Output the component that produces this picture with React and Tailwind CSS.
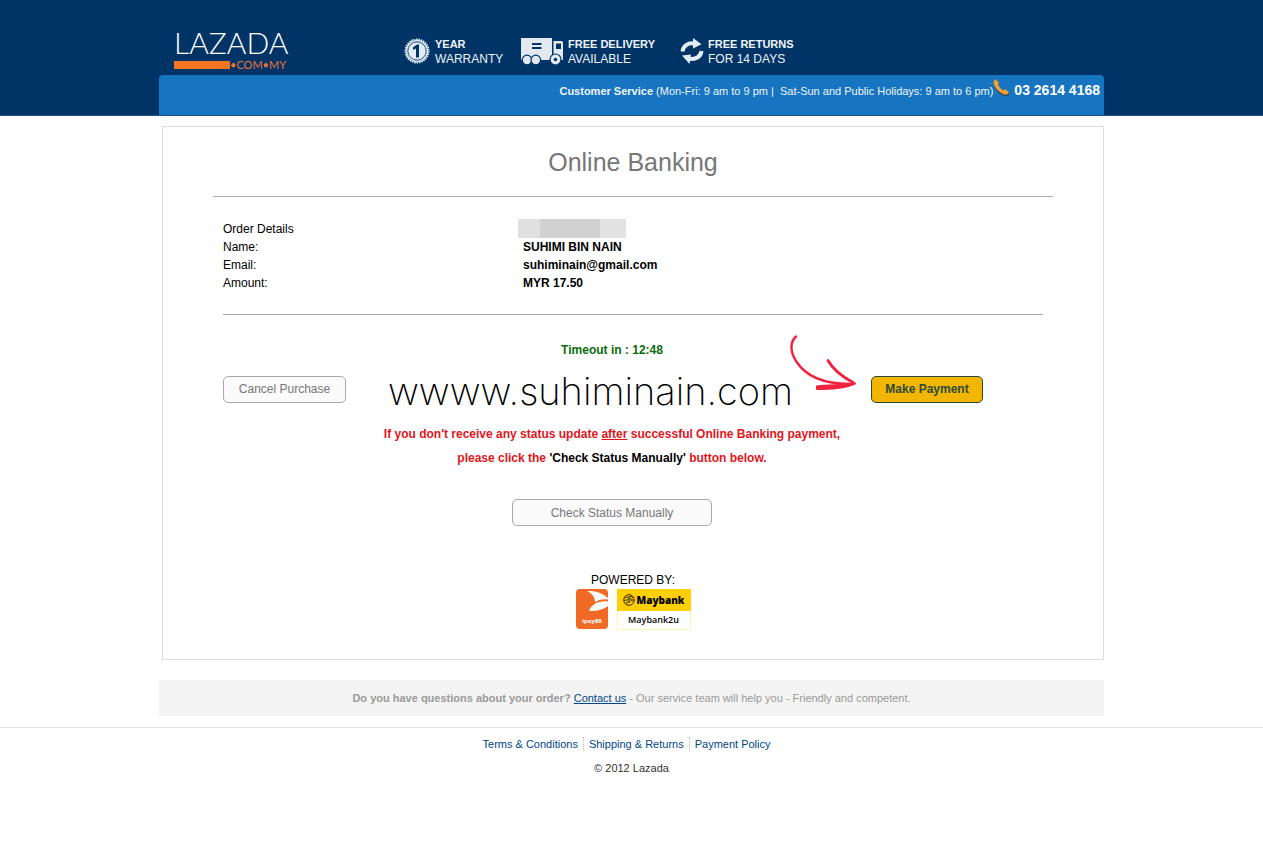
const features = [
  { icon: WarrantyIcon, title: "YEAR", text: "WARRANTY", className: "w-[117px] gap-[5px]" },
  { icon: TruckIcon, title: "FREE DELIVERY", text: "AVAILABLE", className: "w-[159px] gap-1" },
  { icon: ReturnsIcon, title: "FREE RETURNS", text: "FOR 14 DAYS", className: "gap-1" },
];

const orderDetails = [
  { label: "Name:", value: "SUHIMI BIN NAIN" },
  { label: "Email:", value: "suhiminain@gmail.com" },
  { label: "Amount:", value: "MYR 17.50" },
];

const footerLinks = ["Terms & Conditions", "Shipping & Returns", "Payment Policy"];

function WarrantyIcon() {
  return (
    <svg className="mt-px" width="26" height="26" viewBox="0 0 26 26" aria-hidden="true">
      <circle cx="13" cy="13" r="11" fill="none" stroke="#e3ebf5" strokeWidth="3" strokeDasharray="1.5 0.8" />
      <circle cx="13" cy="13" r="11" fill="#e3ebf5" />
      <circle cx="13" cy="13" r="9.2" fill="none" stroke="#003366" strokeWidth="0.9" />
      <path d="M9 9.300 13.200 6.500h1.800v13h-3V10.600l-3 1.500z" fill="#003366" />
    </svg>
  );
}

function TruckIcon() {
  return (
    <svg className="mt-px" width="43" height="27" viewBox="0 0 43 27" aria-hidden="true">
      <path d="M0 0h31v22H0z" fill="#e3e9f0" />
      <path d="M32.500 3h8q1.500 0 1.500 1.500V22H30V20.500h2.500z" fill="#e3e9f0" />
      <path d="M35 5.500h5v5.500h-5z" fill="#003366" />
      <path d="M11 6h9.500M11 10h9.500" stroke="#003366" strokeWidth="2" />
      <g fill="#e3e9f0" stroke="#003366" strokeWidth="1.200">
        <circle cx="6" cy="22" r="4.800" />
        <circle cx="14.800" cy="22" r="4.800" />
        <circle cx="34.500" cy="21.500" r="5.500" />
      </g>
      <circle cx="34.500" cy="21.500" r="1.700" fill="#003366" />
    </svg>
  );
}

function ReturnsIcon() {
  return (
    <svg className="mt-px" width="24" height="26" viewBox="0 0 24 26" aria-hidden="true">
      <g fill="none" stroke="#e3ebf5" strokeWidth="4">
        <path d="M2.500 13.500C3 8 8 4.500 14 5.500" />
        <path d="M21.500 13C21 18.500 16 21.500 10 20.800" />
      </g>
      <path d="M13 0l8.500 6.200L13 10.500z" fill="#e3ebf5" />
      <path d="M2 17.500l9-1-1.500 9.500z" fill="#e3ebf5" />
    </svg>
  );
}

function PhoneIcon() {
  return (
    <svg width="17" height="18" viewBox="0 0 17 18" aria-hidden="true">
      <path
        d="M2.800 1.200C.5 2.200.3 4 1.200 6.500c1.500 4.300 5 8.300 9.500 10 2.200.8 4 .5 5.600-1.700l-3.600-3.500-2.500 1C7.800 10.800 6.300 8.900 5.600 6.800L6 4.500z"
        fill="#2d3d4f"
      />
      <path
        d="M2.500.3C.5 1.300.2 3.200 1 5.500c1.500 4.300 5 8 9.500 9.800 2.200.8 4.200.3 5.500-1.700l-3.300-3.300-2.700 1C7.600 9.800 6 8 5.300 5.800L5.800 3.500z"
        fill="#f0a030"
      />
    </svg>
  );
}

function Logo() {
  return (
    <a href="#" className="block w-[115px] font-['Lato']">
      <span className="block h-[29px] text-[30px] leading-5 font-light text-white">LAZADA</span>
      <span className="flex h-2 items-center text-[11px] leading-2 text-[#e8743b]">
        <span className="h-2 w-14 bg-[#f47621]" />
        •COM•MY
      </span>
    </a>
  );
}

function Arrow() {
  return (
    <svg
      className="absolute -top-[34px] left-[567px]"
      width="67"
      height="56"
      viewBox="0 0 67 56"
      fill="none"
      stroke="#f0233f"
      strokeLinecap="round"
      strokeLinejoin="round"
      aria-hidden="true"
    >
      <path d="M6 1.500C-1 8 1 18 6 26c10 16 29 23 54 23" strokeWidth="2.400" />
      <path d="M38 25.500c5 9 14 16 25 22" strokeWidth="2.800" />
      <path d="M27 51.500C38 49.500 52 51 65 48.500 54 53.500 40 54 27 54z" fill="#f0233f" strokeWidth="2" />
    </svg>
  );
}

function IpayLogo() {
  return (
    <svg width="32" height="40" viewBox="0 0 32 40" role="img" aria-label="ipay88">
      <rect width="32" height="40" rx="4" fill="#f06a26" />
      <path d="M11 2c8-.5 15 1.500 21 7v1.500c-5-.8-10 .5-13 2.500C19 8 16 4.500 11 2z" fill="#fff" />
      <path d="M13 22c2-6 9-10.500 19-9.500V17c-5 4-12 5.500-19 5z" fill="#fff" />
      <text x="16" y="34" textAnchor="middle" fill="#fff" fontFamily="Open Sans, sans-serif" fontSize="6" fontWeight="700">
        ipay88
      </text>
    </svg>
  );
}

function MaybankLogo() {
  return (
    <div className="w-[74px] border border-[#fff3b0] text-center font-['Open_Sans']">
      <div className="-mx-px -mt-px flex h-[22px] items-center justify-center gap-0.5 bg-[#ffcf06] text-[10px] font-extrabold">
        <svg width="12" height="12" viewBox="0 0 12 12" fill="none" stroke="#3a3000" aria-hidden="true">
          <circle cx="6" cy="6" r="5.300" />
          <path d="M1.500 4C3 2 5 4 6 3s3-1 4 1M1 7c1-2 3 0 4-1.500S9 5 11 6.500M3 10c0-3 3-1 4-2.500s2-1 3 0M6 3v6" />
        </svg>
        Maybank
      </div>
      <div className="h-[18px] text-[9px] leading-[18px] font-semibold">Maybank2u</div>
    </div>
  );
}

function Header() {
  return (
    <header className="border-b border-[#1c4f8c] bg-[#003366] text-[#f0f5fa]">
      <div className="mx-auto max-w-[945px]">
        <div className="flex h-[75px] items-start">
          <div className="w-[245px] pt-8 pl-[15px]">
            <Logo />
          </div>
          {features.map(({ icon: Icon, title, text, className }) => (
            <div key={title} className={`flex shrink-0 items-start pt-[37px] text-xs leading-[15px] ${className}`}>
              <Icon />
              <p>
                <strong className="block text-[11px]">{title}</strong>
                {text}
              </p>
            </div>
          ))}
        </div>
        <div className="flex h-10 items-start justify-end rounded-t bg-[#1674c0] pt-1 pr-1">
          <p className="pt-1 text-[11px] leading-4 whitespace-pre">
            <strong>Customer Service</strong> (Mon-Fri: 9 am to 9 pm {"| "} Sat-Sun and Public Holidays: 9 am to 6 pm)
          </p>
          <PhoneIcon />
          <strong className="pt-[3px] pl-1 text-sm leading-4 text-white">03 2614 4168</strong>
        </div>
      </div>
    </header>
  );
}

function Payment() {
  return (
    <main className="mt-[10px] ml-[3px] border border-[#dcdfe0] px-[50px] pb-[29px]">
      <h1 className="pt-5 text-center text-[25px] leading-[30px] text-[#777]">Online Banking</h1>
      <hr className="mt-[19px] border-[#aaa]" />

      <div className="px-[10px] pt-[22px] text-xs leading-[18px]">
        <table className="w-full text-left">
          <tbody>
            <tr>
              <th className="w-[295px] pt-px font-normal">Order Details</th>
              <td>
                <div className="flex h-[19px]" aria-label="Hidden order number">
                  <span className="w-[22px] bg-[#e0e0e0]" />
                  <span className="w-[60px] bg-[#d1d1d1]" />
                  <span className="w-[26px] bg-[#e2e2e2]" />
                </div>
              </td>
            </tr>
            {orderDetails.map(({ label, value }) => (
              <tr key={label}>
                <th className="font-normal">{label}</th>
                <td className="pl-[5px] font-bold">{value}</td>
              </tr>
            ))}
          </tbody>
        </table>
        <hr className="mt-[22px] border-[#aaa]" />

        <div className="mr-[42px] pt-[26px] text-center font-bold">
          <p className="text-[#0a6b0a]">Timeout in : 12:48</p>
          <div className="relative mt-[10px] flex h-10 items-center pr-[18px]">
            <button type="button" className="h-[27px] w-[123px] rounded-[5px] border border-[#aaa] bg-[#fafafa] text-xs font-normal text-[#777]">
              Cancel Purchase
            </button>
            <span className="ml-[42px] pt-1 font-['Inter'] text-[38px] leading-10 font-extralight">wwww.suhiminain.com</span>
            <Arrow />
            <button type="button" className="ml-auto h-[27px] w-28 rounded-[5px] border border-[#2c4a3c] bg-[#f2b600] text-xs font-bold text-[#2c4a3c]">
              Make Payment
            </button>
          </div>
          <p className="mt-[13px] leading-6 text-[#e0161c]">
            If you don't receive any status update <u>after</u> successful Online Banking payment,
            <br />
            please click the <span className="text-black">'Check Status Manually'</span> button below.
          </p>
          <button type="button" className="mt-[29px] h-[27px] w-[200px] rounded-[5px] border border-[#aaa] bg-[#fafafa] text-xs font-normal text-[#777]">
            Check Status Manually
          </button>
        </div>

        <div className="pt-[46px] text-center">
          <p className="leading-[17px]">POWERED BY:</p>
          <div className="flex items-start justify-center gap-[9px]">
            <IpayLogo />
            <MaybankLogo />
          </div>
        </div>
      </div>
    </main>
  );
}

export default function App() {
  return (
    <div className="min-h-screen bg-white font-['Liberation_Sans',Arial,sans-serif] text-black">
      <Header />
      <div className="mx-auto max-w-[945px]">
        <Payment />
        <p className="mt-5 bg-[#f4f4f4] py-[10px] text-center text-[11px] leading-4 text-[#999]">
          <strong>Do you have questions about your order?</strong>{" "}
          <a href="#" className="text-[#00468c] underline">
            Contact us
          </a>{" "}
          - Our service team will help you - Friendly and competent.
        </p>
      </div>
      <footer className="mt-[11px] border-t border-[#e3e3e3] pt-[9px] text-center text-[11px] leading-[14px]">
        <nav className="flex justify-center pr-[10px] text-[#00468c]">
          {footerLinks.map((link) => (
            <a key={link} href="#" className="border-l border-dotted border-[#bbb] px-[5px] first:border-0">
              {link}
            </a>
          ))}
        </nav>
        <p className="mt-[10px] text-[#333]">© 2012 Lazada</p>
      </footer>
    </div>
  );
}
